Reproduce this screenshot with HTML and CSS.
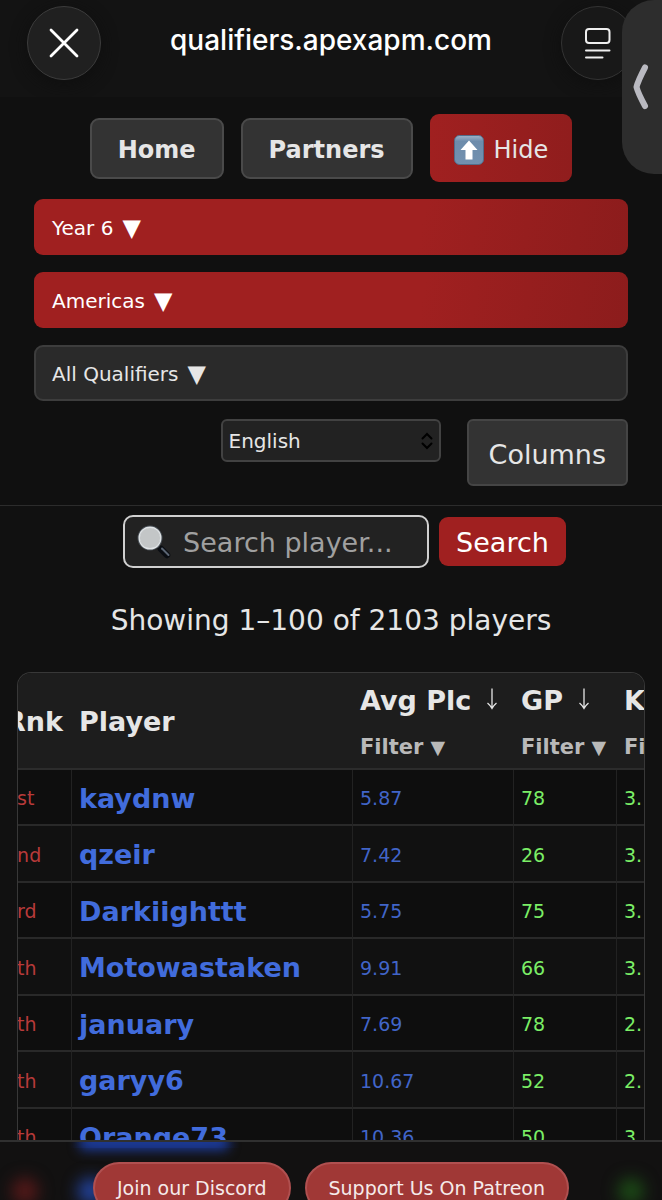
FILE: index.html
```html
<!DOCTYPE html>
<html lang="en">
<head>
<meta charset="utf-8">
<meta name="viewport" content="width=device-width, initial-scale=1">
<title>qualifiers.apexapm.com</title>
<link rel="stylesheet" href="styles.css">
</head>
<body>
<header class="browser-bar">
  <button class="round-btn" type="button" aria-label="Close">
    <svg width="32" height="32" viewBox="0 0 32 32"><path d="M3 3L29 29M29 3L3 29" fill="none" stroke="#fff" stroke-width="2.800" stroke-linecap="round"/></svg>
  </button>
  <div class="address">qualifiers.apexapm.com</div>
  <button class="round-btn" type="button" aria-label="Page menu">
    <svg width="28" height="34" viewBox="0 0 28 34" fill="none" stroke="#eee" stroke-width="2" stroke-linecap="round"><rect x="2" y="3" width="23.500" height="14" rx="3"/><path d="M2 24.500H25.500M2 31.500H18.500"/></svg>
  </button>
</header>
<button class="side-tab" type="button" aria-label="Show panel">
  <svg width="18" height="48" viewBox="0 0 18 48"><path d="M13 4.500Q6 18 4.500 24Q6 30 13 43" fill="none" stroke="#b9b9c0" stroke-width="6" stroke-linecap="round" stroke-linejoin="round"/></svg>
</button>

<section class="controls">
  <nav class="nav">
    <a class="nav-link" href="#home">Home</a>
    <a class="nav-link" href="#partners">Partners</a>
    <button class="hide-btn" type="button">
      <svg width="30" height="30" viewBox="0 0 30 30" aria-hidden="true"><defs><linearGradient id="tile" x1="0" y1="0" x2="0" y2="1"><stop offset="0" stop-color="#9fb4ca"/><stop offset=".2" stop-color="#6d8cab"/><stop offset="1" stop-color="#7291b0"/></linearGradient></defs><rect x=".5" y=".5" width="29" height="29" rx="5" fill="url(#tile)" stroke="#526d8a"/><path d="M15 5.500L23.500 15H18.500V24.500H11.500V15H6.500Z" fill="#fff"/></svg>
      <span>Hide</span>
    </button>
  </nav>
  <button class="picker active" type="button">Year 6 <span class="caret">▼</span></button>
  <button class="picker active" type="button">Americas <span class="caret">▼</span></button>
  <button class="picker" type="button">All Qualifiers <span class="caret">▼</span></button>
  <div class="tools">
    <div class="language">
      <select aria-label="Language"><option>English</option></select>
      <svg width="12" height="18" viewBox="0 0 12 18" aria-hidden="true"><path d="M1.500 6.500L6 2L10.500 6.500M1.500 11.500L6 16L10.500 11.500" fill="none" stroke="#000" stroke-width="2" stroke-linecap="round"/></svg>
    </div>
    <button class="columns-btn" type="button">Columns</button>
  </div>
</section>

<form class="search" role="search">
  <div class="search-field">
    <input type="search" aria-label="Search player" placeholder="Search player...">
    <svg width="34" height="34" viewBox="0 0 34 34" aria-hidden="true"><path d="M20 20L26 26" stroke="#a8adb3" stroke-width="3"/><path d="M24 24L30 30" stroke="#0a0d12" stroke-width="6.500" stroke-linecap="round"/><path d="M25 23.500L31.500 30" stroke="#5b6573" stroke-width="2" stroke-linecap="round"/><circle cx="13" cy="13" r="11.500" fill="#c3c6c7" stroke="#4a5057" stroke-width="2"/><circle cx="13" cy="13" r="10.800" fill="none" stroke="#dfe3e5" stroke-width="1.400"/></svg>
  </div>
  <button class="search-btn" type="submit">Search</button>
</form>
<p class="summary">Showing 1–100 of 2103 players</p>

<main class="table-wrap">
  <table class="players">
    <colgroup><col class="c-rank"><col class="c-name"><col class="c-plc"><col class="c-gp"><col class="c-k"></colgroup>
    <thead>
      <tr>
        <th>Rnk</th>
        <th>Player</th>
        <th><div class="sort">Avg Plc <svg width="12" height="24" viewBox="0 0 12 24"><path d="M6 1.500V21M1.500 16Q4 18 6 21.500Q8 18 10.500 16" fill="none" stroke="#e6e6e6" stroke-width="1.300"/></svg></div><button class="filter" type="button">Filter <span>▼</span></button></th>
        <th><div class="sort">GP <svg width="12" height="24" viewBox="0 0 12 24"><path d="M6 1.500V21M1.500 16Q4 18 6 21.500Q8 18 10.500 16" fill="none" stroke="#e6e6e6" stroke-width="1.300"/></svg></div><button class="filter" type="button">Filter <span>▼</span></button></th>
        <th><div class="sort">K</div><button class="filter" type="button">Filter</button></th>
      </tr>
    </thead>
    <tbody>
      <tr><td class="rank">1st</td><td><a href="#p1">kaydnw</a></td><td class="plc">5.87</td><td>78</td><td>3.</td></tr>
      <tr><td class="rank">2nd</td><td><a href="#p2">qzeir</a></td><td class="plc">7.42</td><td>26</td><td>3.</td></tr>
      <tr><td class="rank">3rd</td><td><a href="#p3">Darkiighttt</a></td><td class="plc">5.75</td><td>75</td><td>3.</td></tr>
      <tr><td class="rank">4th</td><td><a href="#p4">Motowastaken</a></td><td class="plc">9.91</td><td>66</td><td>3.</td></tr>
      <tr><td class="rank">5th</td><td><a href="#p5">january</a></td><td class="plc">7.69</td><td>78</td><td>2.</td></tr>
      <tr><td class="rank">6th</td><td><a href="#p6">garyy6</a></td><td class="plc">10.67</td><td>52</td><td>2.</td></tr>
      <tr><td class="rank">7th</td><td><a href="#p7">Orange73</a></td><td class="plc">10.36</td><td>50</td><td>3.</td></tr>
    </tbody>
  </table>
</main>

<footer class="support">
  <span class="glow red"></span>
  <span class="glow blue"></span>
  <span class="glow green"></span>
  <a href="#discord">Join our Discord</a>
  <a href="#patreon">Support Us On Patreon</a>
</footer>
</body>
</html>
```
FILE: styles.css
```css
* { box-sizing: border-box; }

body {
  margin: 0;
  height: 100vh;
  overflow: hidden;
  display: flex;
  flex-direction: column;
  background: #111;
  color: #e6e6e6;
  font-family: Verdana, "DejaVu Sans", sans-serif;
  font-size: 27px;
}

button, input, select { font: inherit; color: inherit; margin: 0; }
a { text-decoration: none; color: inherit; }
svg { display: block; flex: none; }

.browser-bar {
  flex: none;
  height: 97px;
  padding: 6px 27px 0;
  display: flex;
  align-items: flex-start;
  justify-content: space-between;
  background: #131313;
}
.round-btn {
  width: 74px;
  height: 74px;
  padding: 0;
  display: flex;
  align-items: center;
  justify-content: center;
  border: 1px solid #3c3c3c;
  border-radius: 50%;
  background: #202020;
  box-shadow: 0 4px 16px #0f0f0f;
}
.round-btn:last-child { background: #181818; border-color: #333; }
.address {
  line-height: 68px;
  color: #fff;
  font-family: Inter, sans-serif;
  font-size: 28px;
  font-weight: 500;
}
.side-tab {
  position: absolute;
  top: 0;
  right: 0;
  width: 40px;
  height: 174px;
  padding: 0 0 0 10px;
  display: flex;
  align-items: center;
  border: 0;
  border-radius: 32px 0 0 32px;
  background: #2d2d2d;
}

.controls {
  flex: none;
  padding: 17px 34px 19px;
  display: flex;
  flex-direction: column;
  gap: 17px;
  border-bottom: 1px solid #2c2c2c;
  background: #101010;
}
.nav { display: flex; align-items: center; justify-content: center; gap: 17px; }
.nav-link {
  height: 61px;
  padding: 0 26px;
  border: 2px solid #4a4a4a;
  border-radius: 9px;
  background: #333;
  font-size: 24px;
  font-weight: bold;
  line-height: 60px;
}
.hide-btn {
  height: 68px;
  padding: 4px 24px 0;
  display: flex;
  align-items: center;
  gap: 10px;
  border: 0;
  border-radius: 9px;
  background: linear-gradient(90deg, #a02020, #901d1d);
  font-size: 24px;
}
.picker {
  height: 56px;
  padding: 2px 16px 0;
  display: flex;
  align-items: center;
  gap: 9px;
  border: 2px solid #3d3d3d;
  border-radius: 9px;
  background: #2a2a2a;
  font-size: 20px;
  text-align: left;
}
.picker.active {
  border-color: transparent;
  background: linear-gradient(100deg, #a02020 65%, #8c1c1c) border-box;
  color: #fff;
}
.caret { font-size: 24px; line-height: 24px; }

.tools { display: flex; justify-content: flex-end; align-items: flex-start; gap: 26px; padding-top: 1px; }
.language { position: relative; }
.language select {
  display: block;
  width: 220px;
  height: 43px;
  padding: 1px 6px 0;
  appearance: none;
  border: 2px solid #424242;
  border-radius: 6px;
  background: #222;
  font-size: 20px;
}
.language svg { position: absolute; right: 8px; top: 13px; }
.columns-btn {
  height: 67px;
  padding: 3px 20px 0;
  border: 2px solid #454545;
  border-radius: 6px;
  background: #333;
}

.search {
  flex: none;
  display: flex;
  align-items: center;
  justify-content: center;
  gap: 10px;
  padding: 9px 0 0 27px;
}
.search-field { position: relative; }
.search-field input {
  display: block;
  width: 306px;
  height: 53px;
  padding: 2px 8px 0 58px;
  appearance: none;
  border: 2px solid #d0d0d0;
  border-radius: 10px;
  background: #222;
}
.search-field input::placeholder { color: #a0a0a0; opacity: 1; }
.search-field svg { position: absolute; left: 14px; top: 10px; }
.search-btn {
  height: 49px;
  padding: 2px 17px 0;
  border: 0;
  border-radius: 9px;
  background: #a02020;
  color: #fff;
}
.summary { flex: none; margin: 33px 0 31px; font-size: 28px; line-height: 40px; text-align: center; }

.table-wrap {
  flex: 1;
  min-height: 0;
  margin: 0 17px;
  overflow: hidden;
  border: 1px solid #383838;
  border-bottom: 0;
  border-radius: 14px 14px 0 0;
}
.players {
  width: 760px;
  margin-left: -20px;
  table-layout: fixed;
  border-collapse: separate;
  border-spacing: 0;
}
.c-rank { width: 74px; }
.c-name { width: 281px; }
.c-plc { width: 161px; }
.c-gp { width: 103px; }
.players th {
  height: 97px;
  padding: 2px 7px 0;
  border-bottom: 2px solid #2c2c2c;
  background: #1d1d1d;
  text-align: left;
  white-space: nowrap;
}
.players td {
  height: 56px;
  padding: 2px 7px 0;
  border-right: 1px solid #222;
  border-bottom: 2px solid #292929;
  background: #0e0e0e;
  color: #7bee66;
  font-size: 19px;
}
.players tr:nth-child(even) td { height: 57px; background: #111; }
.players .rank { color: #b83a3a; }
.players .plc { color: #4165c8; }
.players td a { color: #416cdc; font-size: 27px; font-weight: bold; }
.sort { display: flex; align-items: center; gap: 15px; line-height: 52px; }
.sort svg { margin-bottom: 4px; }
.filter {
  display: flex;
  align-items: center;
  gap: 7px;
  padding: 0;
  border: 0;
  background: none;
  color: #b9b9b9;
  font-size: 21px;
  font-weight: bold;
  line-height: 41px;
}
.filter span { font-size: 19px; font-weight: normal; }

.support {
  position: fixed;
  left: 0;
  right: 0;
  bottom: 0;
  height: 60px;
  overflow: hidden;
  padding-top: 20px;
  display: flex;
  justify-content: center;
  align-items: flex-start;
  gap: 14px;
  border-top: 2px solid #303030;
  background: linear-gradient(90deg, transparent 70px, #13245acc 100px, #13245acc 200px, transparent 240px) 0 0 / 100% 6px no-repeat, #121111;
}
.glow {
  position: absolute;
  top: 36px;
  width: 26px;
  height: 26px;
  border-radius: 50%;
  filter: blur(8px);
}
.glow.red { left: 12px; background: #571919; }
.glow.blue { left: 78px; background: #2344a0; }
.glow.green { right: 18px; background: #1c4a16; }
.support::before {
  content: "";
  position: absolute;
  left: 80px;
  top: -8px;
  width: 148px;
  height: 16px;
  background: #1d3c9c;
  filter: blur(6px);
}
.support a {
  position: relative;
  flex: none;
  padding: 0 22px;
  border: 2px solid #b05050;
  border-radius: 26px;
  background: #a03836;
  color: #f5eaea;
  font-size: 19px;
  line-height: 48px;
}
```
